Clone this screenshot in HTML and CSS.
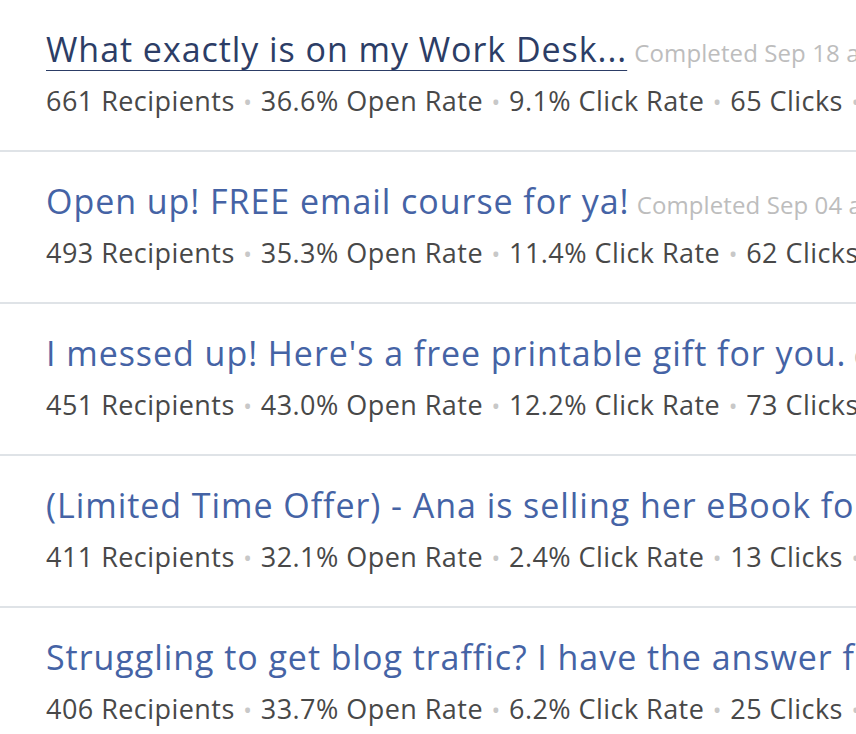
FILE: index.html
```html
<!DOCTYPE html>
<html>
<head>
<meta charset="utf-8">
<link rel="stylesheet" href="styles.css">
</head>
<body>
<ul class="list">
  <li class="item">
    <div class="title-line"><a class="title visited" href="#">What exactly is on my Work Desk...</a> <span class="date">Completed Sep 18 at 10:00 AM</span></div>
    <div class="stats">661 Recipients <span class="sep">•</span> 36.6% Open Rate <span class="sep">•</span> 9.1% Click Rate <span class="sep">•</span> 65 Clicks <span class="sep">•</span> 2 Unsubscribes</div>
  </li>
  <li class="item">
    <div class="title-line"><a class="title" href="#">Open up! FREE email course for ya!</a> <span class="date">Completed Sep 04 at 10:00 AM</span></div>
    <div class="stats">493 Recipients <span class="sep">•</span> 35.3% Open Rate <span class="sep">•</span> 11.4% Click Rate <span class="sep">•</span> 62 Clicks <span class="sep">•</span> 3 Unsubscribes</div>
  </li>
  <li class="item">
    <div class="title-line"><a class="title" href="#">I messed up! Here's a free printable gift for you.</a> <span class="date">Completed Aug 28 at 10:00 AM</span></div>
    <div class="stats">451 Recipients <span class="sep">•</span> 43.0% Open Rate <span class="sep">•</span> 12.2% Click Rate <span class="sep">•</span> 73 Clicks <span class="sep">•</span> 1 Unsubscribe</div>
  </li>
  <li class="item">
    <div class="title-line"><a class="title" href="#">(Limited Time Offer) - Ana is selling her eBook for $1</a> <span class="date">Completed Aug 21 at 10:00 AM</span></div>
    <div class="stats">411 Recipients <span class="sep">•</span> 32.1% Open Rate <span class="sep">•</span> 2.4% Click Rate <span class="sep">•</span> 13 Clicks <span class="sep">•</span> 4 Unsubscribes</div>
  </li>
  <li class="item">
    <div class="title-line"><a class="title" href="#">Struggling to get blog traffic? I have the answer for you</a> <span class="date">Completed Aug 14 at 10:00 AM</span></div>
    <div class="stats">406 Recipients <span class="sep">•</span> 33.7% Open Rate <span class="sep">•</span> 6.2% Click Rate <span class="sep">•</span> 25 Clicks <span class="sep">•</span> 2 Unsubscribes</div>
  </li>
</ul>
</body>
</html>
```
FILE: styles.css
```css
html, body {
  margin: 0;
  padding: 0;
  background: #ffffff;
  overflow: hidden;
}
body {
  font-family: "Open Sans", "Noto Sans", sans-serif;
  width: 856px;
  height: 734px;
}
.list {
  list-style: none;
  margin: 0;
  padding: 0;
}
.item {
  padding: 27px 0 31px 46px;
  border-bottom: 2px solid #dfe3e7;
  white-space: nowrap;
  overflow: hidden;
}
.title-line {
  line-height: 44px;
  height: 44px;
  overflow: hidden;
}
.title {
  font-size: 34px;
  letter-spacing: 0.95px;
  color: #4563a5;
  text-decoration: none;
}
.title.visited {
  color: #2c3d66;
  text-decoration: underline;
  text-decoration-thickness: 2px;
  text-underline-offset: 8px;
  text-decoration-skip-ink: none;
}
.date {
  font-size: 24px;
  letter-spacing: 0.1px;
  color: #bdbdbd;
  margin-left: 3px;
}
.stats {
  margin-top: 12px;
  font-size: 27px;
  letter-spacing: 0.45px;
  line-height: 36px;
  height: 36px;
  overflow: hidden;
  color: #484848;
}
.sep {
  color: #c8c8c8;
  font-size: 23px;
  margin: 0 1px;
}
```
